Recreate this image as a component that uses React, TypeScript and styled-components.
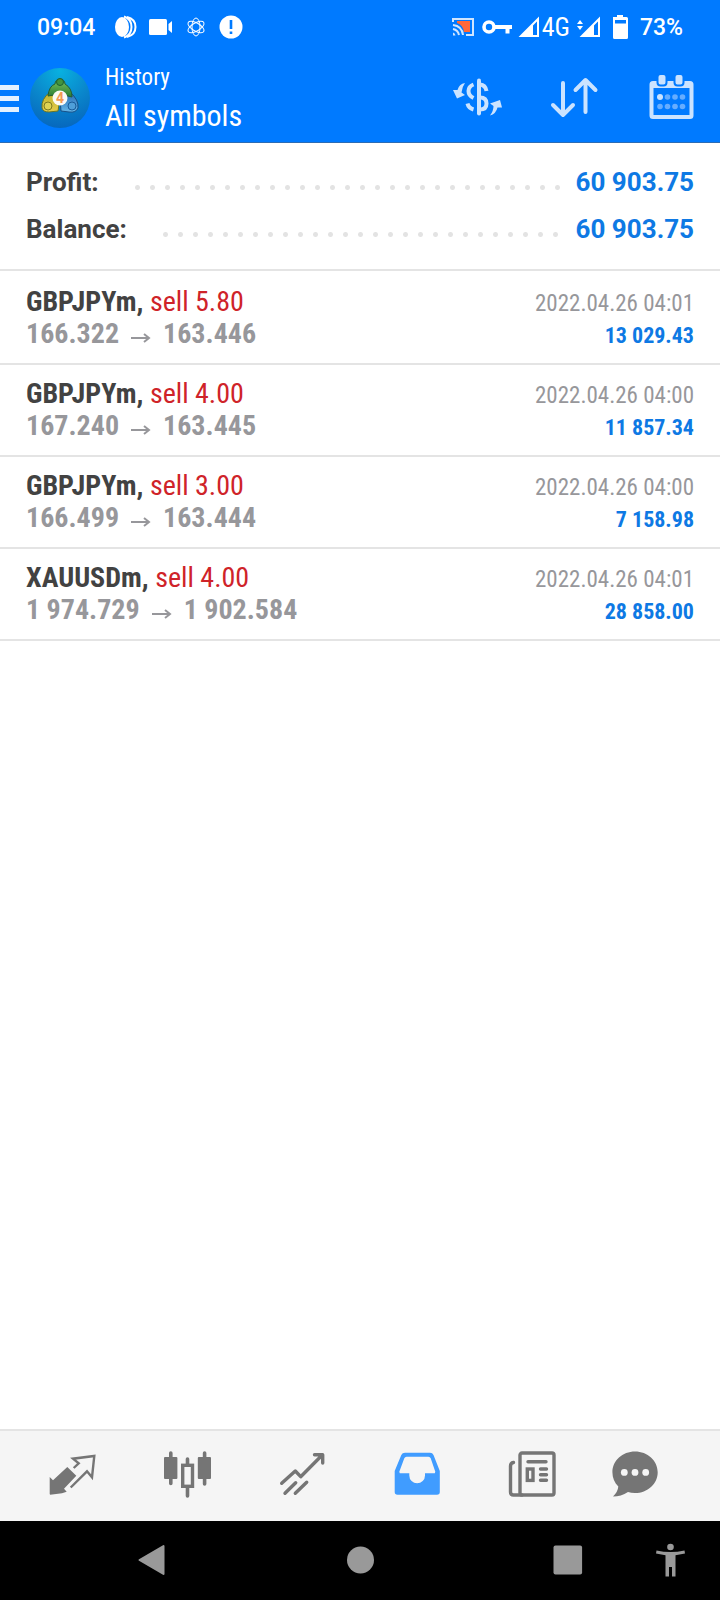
import React from "react";
import styled, { createGlobalStyle } from "styled-components";

const condensed = `"Roboto Condensed", "Liberation Sans Narrow", Roboto, sans-serif`;

const GlobalStyle = createGlobalStyle`
  * { box-sizing: border-box; }
  body { margin: 0; background: #fff; font-family: Roboto, sans-serif; }
  button { border: 0; padding: 0; background: none; color: inherit; font: inherit; cursor: pointer; }
  svg { display: block; flex: none; overflow: visible; }
`;

const Screen = styled.div`
  display: flex;
  flex-direction: column;
  min-height: 100vh;
`;

const Header = styled.header`
  background: #007aff;
  color: #fff;
  border-bottom: 1px solid #2c6cb4;
`;

const StatusBar = styled.div`
  display: flex;
  align-items: center;
  justify-content: space-between;
  height: 54px;
  padding: 0 37px;
  font-size: 23px;
  font-weight: 500;
`;

const StatusGroup = styled.div<{ $gap: number }>`
  display: flex;
  align-items: center;
  gap: ${(p) => p.$gap}px;
`;

const Clock = styled.time`
  margin-right: 8px;
`;

const Network = styled.span`
  font-family: ${condensed};
  font-size: 26px;
  font-weight: 400;
`;

const AppBar = styled.div`
  display: flex;
  align-items: center;
  height: 88px;
  padding-right: 25px;
`;

const MenuButton = styled.button`
  display: flex;
  align-items: center;
  gap: 10px;
`;

const Titles = styled.div`
  flex: 1;
  margin-left: 15px;
  font-family: ${condensed};
`;

const Section = styled.div`
  font-size: 23px;
  line-height: 36px;
`;

const Title = styled.h1`
  margin: 0;
  font-size: 30px;
  font-weight: 400;
  line-height: 40px;
`;

const Actions = styled.div`
  display: flex;
  gap: 49px;
`;

const Main = styled.main`
  flex: 1;
`;

const Summary = styled.dl`
  margin: 0;
  padding: 15px 26px 17px;
  border-bottom: 2px solid #e4e4e4;
`;

const SummaryRow = styled.div`
  display: flex;
  align-items: center;
  height: 47px;
  font-size: 26px;
  font-weight: 700;
`;

const Label = styled.dt`
  color: #424242;
`;

const Leader = styled.span`
  flex: 1;
  height: 7px;
  margin: 12px 10px 0 31px;
  background: radial-gradient(circle, #e3e3e3 2px, transparent 3px) 0 0 / 15px 7px repeat-x;
`;

const Total = styled.dd`
  margin: 0;
  color: #0e79e4;
`;

const Deals = styled.ul`
  margin: 0;
  padding: 2px 0 0;
  list-style: none;
  font-family: ${condensed};
`;

const Deal = styled.li`
  padding: 13px 26px;
  border-bottom: 2px solid #e4e4e4;
`;

const DealLine = styled.div`
  display: flex;
  align-items: baseline;
  justify-content: space-between;
  height: 32px;
  font-size: 28px;
  line-height: 32px;
`;

const Pair = styled.span`
  color: #424242;
  font-weight: 700;
`;

const Side = styled.span`
  color: #cf2329;
  font-weight: 400;
`;

const Prices = styled.span`
  display: flex;
  align-items: center;
  gap: 12px;
  color: #97979b;
  font-weight: 700;
`;

const DealTime = styled.time`
  color: #97979b;
  font-size: 23px;
`;

const DealProfit = styled.span`
  color: #0e79e4;
  font-size: 22px;
  font-weight: 700;
`;

const TabBar = styled.nav`
  display: grid;
  grid-template-columns: repeat(5, 115fr) 92fr;
  height: 92px;
  padding: 0 39px 2px 14px;
  background: #f5f5f5;
  border-top: 2px solid #e4e4e4;
`;

const Tab = styled.button<{ $active?: boolean }>`
  display: flex;
  align-items: center;
  justify-content: center;
  color: ${(p) => (p.$active ? "#409cff" : "#757575")};
`;

const SystemBar = styled.nav`
  display: flex;
  align-items: center;
  height: 79px;
  padding: 0 26px 2px 127px;
  background: #000;
  color: #999;
`;

const HomeButton = styled.button`
  margin: 0 auto;
`;

const RecentsButton = styled.button`
  margin-right: 54px;
`;

const deals = [
  { pair: "GBPJPYm", side: "sell 5.80", open: "166.322", close: "163.446", time: "2022.04.26 04:01", profit: "13 029.43" },
  { pair: "GBPJPYm", side: "sell 4.00", open: "167.240", close: "163.445", time: "2022.04.26 04:00", profit: "11 857.34" },
  { pair: "GBPJPYm", side: "sell 3.00", open: "166.499", close: "163.444", time: "2022.04.26 04:00", profit: "7 158.98" },
  { pair: "XAUUSDm", side: "sell 4.00", open: "1 974.729", close: "1 902.584", time: "2022.04.26 04:01", profit: "28 858.00" },
];

const totals = [
  { label: "Profit:", value: "60 903.75" },
  { label: "Balance:", value: "60 903.75" },
];

const Signal = () => (
  <svg width="18" height="20" viewBox="0 0 18 20">
    <path d="M0 19 17 2V19Z" fill="none" stroke="#fff" strokeWidth="2" />
    <path d="M0 19 12 7V19Z" fill="#fff" />
  </svg>
);

const Logo = () => (
  <svg width="60" height="60" viewBox="0 0 60 60">
    <defs>
      <radialGradient id="disc" cx="50%" cy="5%" r="100%">
        <stop offset="0" stopColor="#08b1e0" />
        <stop offset=".5" stopColor="#0a88cc" />
        <stop offset="1" stopColor="#0664bc" />
      </radialGradient>
      <linearGradient id="green" x2="0" y2="1">
        <stop offset="0" stopColor="#7cc45c" />
        <stop offset="1" stopColor="#287c34" />
      </linearGradient>
      <linearGradient id="yellow" x2="0" y2="1">
        <stop offset="0" stopColor="#b9b32c" />
        <stop offset="1" stopColor="#e7cc4c" />
      </linearGradient>
      <linearGradient id="azure" x2="0" y2="1">
        <stop offset="0" stopColor="#2168b4" />
        <stop offset="1" stopColor="#67b7e8" />
      </linearGradient>
    </defs>
    <circle cx="30" cy="30" r="30" fill="url(#disc)" />
    <path d="M20 24Q11 31 12 40 13 44 19 44L28 43 30 30Z" fill="url(#yellow)" stroke="#6c7622" />
    <path d="M40 24Q49 32 48 40 46 45 39 44L31 43 30 30Z" fill="url(#azure)" stroke="#174f86" />
    <path d="M18 28Q19 18 25 16A5 5 0 0 1 35 16Q42 20 42 29L30 26Z" fill="url(#green)" stroke="#245d32" />
    <circle cx="30" cy="14" r="3.500" fill="#42943f" stroke="#1d6032" />
    <circle cx="18" cy="38" r="4" fill="#ded354" stroke="#7e7b20" />
    <circle cx="42" cy="38" r="4" fill="#4f9fd9" stroke="#195b99" />
    <circle cx="30" cy="30" r="7.500" fill="#fbfaf5" />
    <text x="30" y="35" textAnchor="middle" fontFamily="Roboto, sans-serif" fontSize="14" fontWeight="700" fill="#f39a52">4</text>
  </svg>
);

const tabs = [
  {
    name: "Quotes",
    icon: (
      <>
        <path d="M1.7 26 5 29.3 19.3 16 28.3 24.7 16 37.7 18.7 40.7 14 42.2 2.2 43.8 1.7 43Z" fill="currentColor" />
        <path d="M25.7 17 30.7 12.3 25 7.7 46.3 5 44 26.3 39 20.3 22.7 36.5" fill="none" stroke="currentColor" strokeWidth="2.4" />
      </>
    ),
  },
  {
    name: "Charts",
    icon: (
      <>
        <path d="M7.8 2V32.5M41.6 2V33M24.5 8V14M24.5 37V45" stroke="currentColor" strokeWidth="3.6" strokeLinecap="round" />
        <rect x="1" y="6" width="13.4" height="22" rx="1" fill="currentColor" />
        <rect x="34.8" y="6" width="13.2" height="22" rx="1" fill="currentColor" />
        <rect x="19.7" y="14.3" width="9.8" height="21" fill="none" stroke="currentColor" strokeWidth="3.4" />
      </>
    ),
  },
  {
    name: "Trade",
    icon: (
      <path
        d="M3.7 32.3 17.3 20 22.7 25.7 44 4.3M36.5 3.7H44.7V12M7 42.3 17.7 31.7M17.3 42.3 28.7 31.3"
        fill="none" stroke="currentColor" strokeWidth="3.4" strokeLinecap="round" strokeLinejoin="round"
      />
    ),
  },
  {
    name: "History",
    active: true,
    icon: (
      <path
        fillRule="evenodd" fill="currentColor"
        d="M12 1.7H37Q39.5 1.7 40.5 4L46.8 20V41Q46.8 43.7 44 43.7H4.5Q1.7 43.7 1.7 41V20L8.3 4Q9.3 1.7 12 1.7ZM13.5 5.7Q12 5.7 11.3 7.2L6.3 20.7 6.8 22.3H16.3V24.5A7.8 7.8 0 0 0 32 24.5V22.3H41.8L42.3 20.7 37.7 7.2Q37 5.7 35.5 5.7Z"
      />
    ),
  },
  {
    name: "News",
    icon: (
      <g fill="none" stroke="currentColor" strokeWidth="3.4" strokeLinecap="round">
        <rect x="12" y="2" width="34" height="42" rx="2" />
        <path d="M5.5 11.5Q2.5 12 2.5 15V41Q2.5 44 5.5 44H14M20 10.7H38M32.5 18H38.5M32.5 23.7H38.5M32.5 29.3H38.5" />
        <rect x="19.3" y="18" width="5.7" height="11.4" />
      </g>
    ),
  },
  {
    name: "Messages",
    icon: (
      <>
        <path d="M24 .5C36.5 .5 46.7 9.5 46.7 21.2S36.5 42 24 42Q20 42 17 41 10 45.5 2 45.6 7 40.5 7.3 35.5C3.5 31.7 1.4 26.7 1.4 21.2 1.4 9.5 11.5 .5 24 .5Z" fill="currentColor" />
        <g fill="#f5f5f5">
          <circle cx="13.3" cy="21.4" r="3.4" />
          <circle cx="24" cy="21.4" r="3.4" />
          <circle cx="34.7" cy="21.4" r="3.4" />
        </g>
      </>
    ),
  },
];

export default function App() {
  return (
    <Screen>
      <GlobalStyle />
      <Header>
        <StatusBar>
          <StatusGroup $gap={11}>
            <Clock>09:04</Clock>
            <svg width="24" height="24" viewBox="0 0 24 24">
              <ellipse cx="8" cy="12" rx="7" ry="10" fill="#fff" />
              <path d="M10 1.5Q17.5 4 17.5 12T10 22.5M13 2Q21.500 4 21.500 12T13 22" fill="none" stroke="#fff" strokeWidth="2" />
            </svg>
            <svg width="24" height="24" viewBox="0 0 24 24" fill="#fff">
              <rect x="0" y="4" width="18" height="16" rx="1.5" />
              <path d="M19.5 9 23 6V18L19.5 15Z" />
            </svg>
            <svg width="24" height="24" viewBox="0 0 24 24" fill="none" stroke="#fff" strokeWidth="1">
              <ellipse cx="12" cy="12" rx="4" ry="9" />
              <ellipse cx="12" cy="12" rx="4" ry="9" transform="rotate(60 12 12)" />
              <ellipse cx="12" cy="12" rx="4" ry="9" transform="rotate(120 12 12)" />
            </svg>
            <svg width="24" height="24" viewBox="0 0 24 24">
              <circle cx="12" cy="12" r="11.5" fill="#fff" />
              <path d="M12 5V14M12 16.5V19" stroke="#007aff" strokeWidth="2.6" />
            </svg>
          </StatusGroup>
          <StatusGroup $gap={8}>
            <svg width="22" height="20" viewBox="0 0 22 20">
              <path d="M5 4H18V15H12Q11 8 5 6Z" fill="#ff6839" />
              <path d="M1 5V2H21V18H14M1 8Q10 9 11 18M1 12Q6 13 7 18" fill="none" stroke="#cfe5ff" strokeWidth="2" />
              <path d="M1 15.5Q3 16 3.5 18.5H1Z" fill="#cfe5ff" />
            </svg>
            <svg width="31" height="20" viewBox="0 0 31 20">
              <circle cx="7" cy="10" r="5" fill="none" stroke="#fff" strokeWidth="3.6" />
              <path d="M12 10H30M25.5 10V16.5" stroke="#fff" strokeWidth="4" />
            </svg>
            <StatusGroup $gap={3}>
              <Signal />
              <Network>4G</Network>
            </StatusGroup>
            <StatusGroup $gap={0}>
              <svg width="4" height="18" viewBox="0 0 4 18" fill="#fff">
                <path d="M-1 6 2 2 5 6ZM-1 8H5L2 12Z" />
              </svg>
              <Signal />
            </StatusGroup>
            <svg width="24" height="26" viewBox="0 0 24 26">
              <path d="M5.5 3H9V1H15V3H18.5Q20 3 20 4.5V23.5Q20 25 18.5 25H6.5Q5 25 5 23.5V3Z" fill="#fff" />
              <path d="M7 6H18V9.500H7Z" fill="#007aff" />
            </svg>
            <span>73%</span>
          </StatusGroup>
        </StatusBar>
        <AppBar>
          <MenuButton aria-label="Open menu">
            <svg width="20" height="26" viewBox="0 0 20 26" fill="#e4f1ff">
              <path d="M0 0H19V5H0ZM0 11H19V16H0ZM0 22H19V27H0Z" />
            </svg>
            <Logo />
          </MenuButton>
          <Titles>
            <Section>History</Section>
            <Title>All symbols</Title>
          </Titles>
          <Actions>
            <button aria-label="Filter by symbol">
              <svg width="48" height="48" viewBox="0 0 48 48" fill="none" stroke="#cbe3ff" strokeWidth="4">
                <path d="M26 6.5V39.5" strokeLinecap="round" />
                <path d="M20.500 10.500Q15.500 12.500 15.500 17T20.500 24M27 10.500Q32.500 11 33.500 17M27 23.500Q33.500 23.500 33.500 29.500T27 35.500M14.500 29.500Q15.500 34 20.500 35.500" />
                <path d="M12 9Q6 10 4.500 16L0 16 4 24.500 12 21 8.500 18.500Q9 13 12 9ZM37 41.500Q43 40 44.500 33.500L49 33.500 47 26 37 29.500 40.500 32Q40.500 37 37 41.500Z" fill="#cbe3ff" stroke="none" />
              </svg>
            </button>
            <button aria-label="Sort">
              <svg width="48" height="48" viewBox="0 0 48 48" fill="none" stroke="#cbe3ff" strokeWidth="4" strokeLinecap="round" strokeLinejoin="round">
                <path d="M13 9V41M3 31 13 41 23 31M35.5 38V6M25.5 16 35.5 6 45.5 16" />
              </svg>
            </button>
            <button aria-label="Choose period">
              <svg width="48" height="48" viewBox="0 0 48 48">
                <rect x="4.500" y="9" width="40" height="34" rx="1.5" fill="none" stroke="#cbe3ff" strokeWidth="4" />
                <path d="M4 8H45V14H4Z" fill="#cbe3ff" />
                <rect x="10.500" y="0" width="9" height="11.500" rx="3" fill="#cbe3ff" stroke="#007aff" strokeWidth="2" />
                <rect x="27.500" y="0" width="9" height="11.500" rx="3" fill="#cbe3ff" stroke="#007aff" strokeWidth="2" />
                <circle cx="13" cy="23" r="3" fill="#cbe3ff" />
                <g fill="#66adff">
                  <circle cx="20.5" cy="23" r="2.8" /><circle cx="28" cy="23" r="2.8" /><circle cx="35.5" cy="23" r="2.8" />
                  <circle cx="13" cy="32.5" r="2.8" /><circle cx="20.5" cy="32.5" r="2.8" /><circle cx="28" cy="32.5" r="2.8" /><circle cx="35.5" cy="32.5" r="2.8" />
                </g>
              </svg>
            </button>
          </Actions>
        </AppBar>
      </Header>
      <Main>
        <Summary>
          {totals.map((t) => (
            <SummaryRow key={t.label}>
              <Label>{t.label}</Label>
              <Leader />
              <Total>{t.value}</Total>
            </SummaryRow>
          ))}
        </Summary>
        <Deals>
          {deals.map((d, i) => (
            <Deal key={i}>
              <DealLine>
                <Pair>
                  {d.pair}, <Side>{d.side}</Side>
                </Pair>
                <DealTime>{d.time}</DealTime>
              </DealLine>
              <DealLine>
                <Prices>
                  {d.open}
                  <svg width="20" height="20" viewBox="0 0 20 20" fill="none" stroke="currentColor" strokeWidth="2">
                    <path d="M0 14H18M13 10 18 14 13 18" />
                  </svg>
                  {d.close}
                </Prices>
                <DealProfit>{d.profit}</DealProfit>
              </DealLine>
            </Deal>
          ))}
        </Deals>
      </Main>
      <TabBar>
        {tabs.map((t) => (
          <Tab key={t.name} $active={t.active} aria-label={t.name}>
            <svg width="48" height="48" viewBox="0 0 48 48">{t.icon}</svg>
          </Tab>
        ))}
      </TabBar>
      <SystemBar>
        <button aria-label="Back">
          <svg width="48" height="48" viewBox="0 0 48 48">
            <path d="M12.5 24 36.5 10V38Z" fill="currentColor" stroke="currentColor" strokeWidth="2" strokeLinejoin="round" />
          </svg>
        </button>
        <HomeButton aria-label="Home">
          <svg width="48" height="48" viewBox="0 0 48 48">
            <circle cx="24.5" cy="24" r="13.5" fill="currentColor" />
          </svg>
        </HomeButton>
        <RecentsButton aria-label="Recent apps">
          <svg width="48" height="48" viewBox="0 0 48 48">
            <rect x="9.5" y="9.6" width="28.6" height="28.8" rx="2" fill="currentColor" />
          </svg>
        </RecentsButton>
        <button aria-label="Accessibility">
          <svg width="48" height="48" viewBox="0 0 48 48" fill="currentColor">
            <circle cx="24.5" cy="11" r="3.3" />
            <path d="M10.5 14.5Q24.5 17.5 38.5 14.5L39 17.5 29.5 19.2V40.5H26V31H23V40.5H19.5V19.2L10 17.5Z" />
          </svg>
        </button>
      </SystemBar>
    </Screen>
  );
}
